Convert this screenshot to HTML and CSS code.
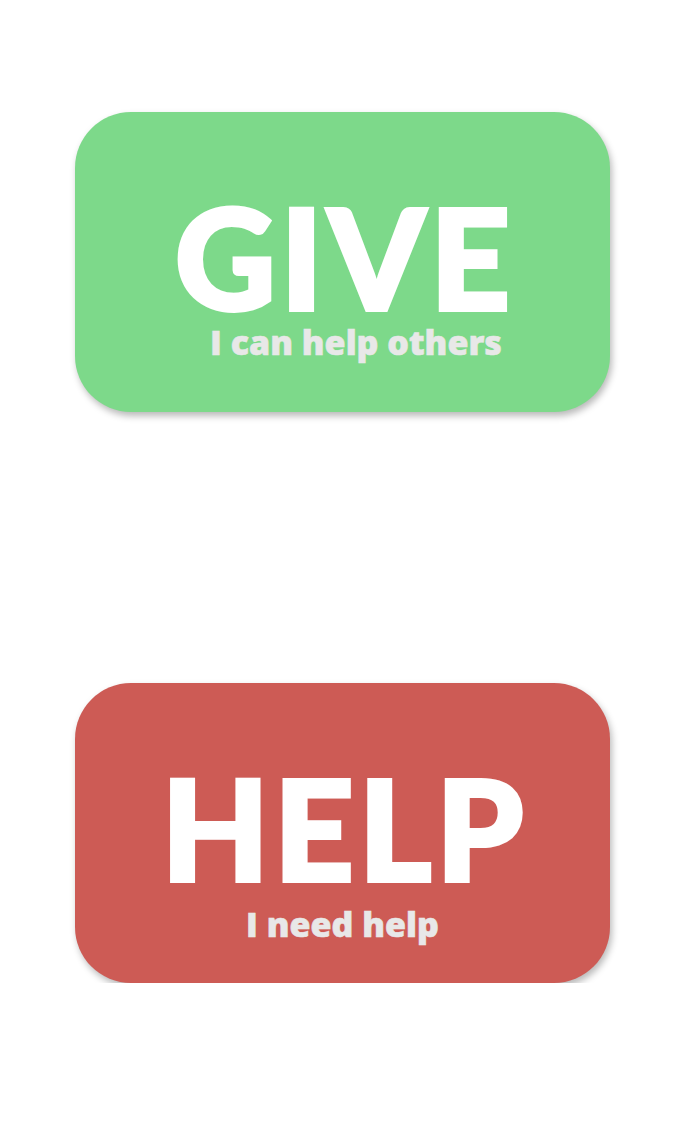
FILE: index.html
```html
<!DOCTYPE html>
<html>
<head>
<meta charset="utf-8">
<link rel="stylesheet" href="styles.css">
</head>
<body>
<main class="page">
  <button class="card card-give">
    <span class="title">GIVE</span>
    <span class="sub sub-give">I can help others</span>
  </button>
  <button class="card card-help">
    <span class="title">HELP</span>
    <span class="sub sub-help">I need help</span>
  </button>
</main>
</body>
</html>
```
FILE: styles.css
```css
html, body {
  margin: 0;
  padding: 0;
  background: #ffffff;
}
.page {
  display: flex;
  flex-direction: column;
  gap: 271px;
  padding: 112px 0 0 75px;
}
.card {
  width: 535px;
  height: 300px;
  border: none;
  border-radius: 56px;
  box-shadow: 2px 4px 7px rgba(0, 0, 0, 0.28);
  display: flex;
  flex-direction: column;
  align-items: center;
  padding: 0;
  color: #ffffff;
  cursor: pointer;
}
.card-give { background: #7dd98a; }
.card-help { background: #cd5b55; }
.title {
  font-family: Lato, "Open Sans", sans-serif;
  font-size: 139px;
  font-weight: 900;
  line-height: 0.9;
  margin-top: 82px;
  padding-left: 5px;
  letter-spacing: 5px;
  color: #ffffff;
  -webkit-text-stroke: 4px #ffffff;
}
.sub {
  font-family: "Open Sans", Lato, sans-serif;
  font-size: 34px;
  font-weight: 800;
  line-height: 1.1;
  letter-spacing: 0;
  margin-top: 5px;
  color: #e8e8e8;
  -webkit-text-stroke: 0.6px #e8e8e8;
}
.sub-give { padding-left: 27px; }
.sub-help { margin-top: 16px; }
```
